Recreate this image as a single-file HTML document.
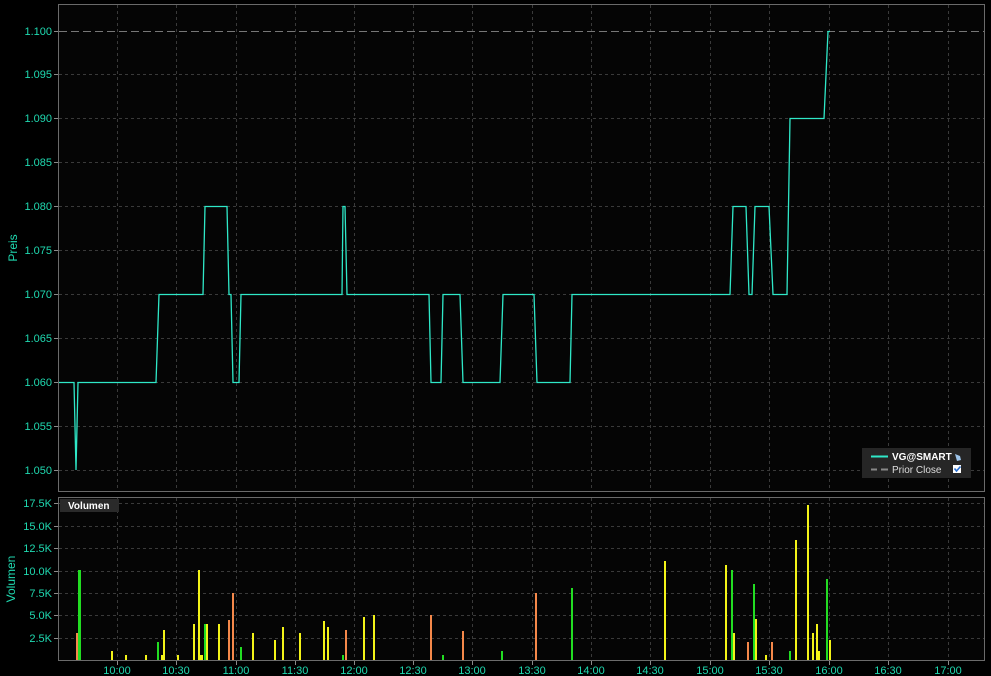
<!DOCTYPE html>
<html><head><meta charset="utf-8"><style>
html,body{margin:0;padding:0;background:#000;width:991px;height:676px;overflow:hidden}
svg{display:block}
text{font-family:"Liberation Sans",sans-serif;font-size:11px;fill:#1fd9b0}
</style></head><body>
<svg width="991" height="676" xmlns="http://www.w3.org/2000/svg">
<rect width="991" height="676" fill="#000"/>
<rect x="58.5" y="4.5" width="926" height="487" fill="#050505" stroke="#6a6a6a"/>
<rect x="58.5" y="497.5" width="926" height="163" fill="#050505" stroke="#6a6a6a"/>
<g stroke="#3a3a3a" stroke-dasharray="3,3" stroke-width="1">
<path d="M117.5 5V491M176.5 5V491M236.5 5V491M295.5 5V491M354.5 5V491M413.5 5V491M472.5 5V491M532.5 5V491M591.5 5V491M650.5 5V491M710.5 5V491M769.5 5V491M829.5 5V491M888.5 5V491M948.5 5V491"/>
<path d="M117.5 498V660M176.5 498V660M236.5 498V660M295.5 498V660M354.5 498V660M413.5 498V660M472.5 498V660M532.5 498V660M591.5 498V660M650.5 498V660M710.5 498V660M769.5 498V660M829.5 498V660M888.5 498V660M948.5 498V660"/>
<path d="M59 74.5H984M59 118.5H984M59 162.5H984M59 206.5H984M59 250.5H984M59 294.5H984M59 338.5H984M59 382.5H984M59 426.5H984M59 470.5H984"/>
<path d="M59 503.5H984M59 526.5H984M59 548.5H984M59 571.5H984M59 593.5H984M59 615.5H984M59 638.5H984"/>
</g>
<path d="M59 31.5H984" stroke="#777" stroke-dasharray="8,4"/>
<g stroke="#8a8a8a">
<path d="M54 31.5H58M54 74.5H58M54 118.5H58M54 162.5H58M54 206.5H58M54 250.5H58M54 294.5H58M54 338.5H58M54 382.5H58M54 426.5H58M54 470.5H58"/>
<path d="M54 503.5H58M54 526.5H58M54 548.5H58M54 571.5H58M54 593.5H58M54 615.5H58M54 638.5H58"/>
<path d="M117.5 661V665M176.5 661V665M236.5 661V665M295.5 661V665M354.5 661V665M413.5 661V665M472.5 661V665M532.5 661V665M591.5 661V665M650.5 661V665M710.5 661V665M769.5 661V665M829.5 661V665M888.5 661V665M948.5 661V665"/>
</g>
<g text-anchor="end">
<text x="52" y="35">1.100</text><text x="52" y="78">1.095</text><text x="52" y="122">1.090</text><text x="52" y="166">1.085</text><text x="52" y="210">1.080</text><text x="52" y="254">1.075</text><text x="52" y="298">1.070</text><text x="52" y="342">1.065</text><text x="52" y="386">1.060</text><text x="52" y="430">1.055</text><text x="52" y="474">1.050</text>
<text x="52" y="507">17.5K</text><text x="52" y="530">15.0K</text><text x="52" y="552">12.5K</text><text x="52" y="575">10.0K</text><text x="52" y="597">7.5K</text><text x="52" y="619">5.0K</text><text x="52" y="642">2.5K</text>
</g>
<g text-anchor="middle">
<text x="117" y="674">10:00</text><text x="176" y="674">10:30</text><text x="236" y="674">11:00</text><text x="295" y="674">11:30</text><text x="354" y="674">12:00</text><text x="413" y="674">12:30</text><text x="472" y="674">13:00</text><text x="532" y="674">13:30</text><text x="591" y="674">14:00</text><text x="650" y="674">14:30</text><text x="710" y="674">15:00</text><text x="769" y="674">15:30</text><text x="829" y="674">16:00</text><text x="888" y="674">16:30</text><text x="948" y="674">17:00</text>
</g>
<text transform="translate(17,248) rotate(-90)" text-anchor="middle" style="font-size:12px">Preis</text>
<text transform="translate(15,579) rotate(-90)" text-anchor="middle" style="font-size:12px">Volumen</text>
<path d="M59 382.5H74L76 470L78 382.5H156L159 294.5H203L205 206.5H227L229 294.5H231L233 382.5H239L241 294.5H342L343 206.5H345L347 294.5H429L431 382.5H441L443 294.5H460L463 382.5H500L503 294.5H534L537 382.5H570L572 294.5H730L733 206.5H746L749 294.5H752L755 206.5H769L773 294.5H787L790 118.5H824L828 31.5H830" fill="none" stroke="#2fe8c8" stroke-width="1.3"/>
<g>
<rect x="76" y="633" width="3" height="27" fill="#f5884a"/>
<rect x="78" y="570" width="3" height="90" fill="#22dd22"/>
<rect x="111" y="651" width="2" height="9" fill="#f3f318"/>
<rect x="125" y="655" width="2" height="5" fill="#f3f318"/>
<rect x="145" y="655" width="2" height="5" fill="#f3f318"/>
<rect x="157" y="642" width="2" height="18" fill="#22dd22"/>
<rect x="161" y="655" width="2" height="5" fill="#f3f318"/>
<rect x="163" y="630" width="2" height="30" fill="#f3f318"/>
<rect x="177" y="655" width="2" height="5" fill="#f3f318"/>
<rect x="193" y="624" width="2" height="36" fill="#f3f318"/>
<rect x="198" y="570" width="2" height="90" fill="#f3f318"/>
<rect x="200" y="655" width="3" height="5" fill="#f3f318"/>
<rect x="204" y="624" width="2" height="36" fill="#22dd22"/>
<rect x="206" y="624" width="2" height="36" fill="#f3f318"/>
<rect x="218" y="624" width="2" height="36" fill="#f3f318"/>
<rect x="228" y="620" width="2" height="40" fill="#f5884a"/>
<rect x="232" y="593" width="2" height="67" fill="#f5884a"/>
<rect x="240" y="647" width="2" height="13" fill="#22dd22"/>
<rect x="252" y="633" width="2" height="27" fill="#f3f318"/>
<rect x="274" y="640" width="2" height="20" fill="#f3f318"/>
<rect x="282" y="627" width="2" height="33" fill="#f3f318"/>
<rect x="299" y="633" width="2" height="27" fill="#f3f318"/>
<rect x="323" y="621" width="2" height="39" fill="#f3f318"/>
<rect x="327" y="627" width="2" height="33" fill="#f3f318"/>
<rect x="342" y="655" width="2" height="5" fill="#22dd22"/>
<rect x="345" y="630" width="2" height="30" fill="#f5884a"/>
<rect x="363" y="617" width="2" height="43" fill="#f3f318"/>
<rect x="373" y="615" width="2" height="45" fill="#f3f318"/>
<rect x="430" y="615" width="2" height="45" fill="#f5884a"/>
<rect x="442" y="655" width="2" height="5" fill="#22dd22"/>
<rect x="462" y="631" width="2" height="29" fill="#f5884a"/>
<rect x="501" y="651" width="2" height="9" fill="#22dd22"/>
<rect x="535" y="593" width="2" height="67" fill="#f5884a"/>
<rect x="571" y="588" width="2" height="72" fill="#22dd22"/>
<rect x="664" y="561" width="2" height="99" fill="#f3f318"/>
<rect x="725" y="565" width="2" height="95" fill="#f3f318"/>
<rect x="731" y="570" width="2" height="90" fill="#22dd22"/>
<rect x="733" y="633" width="2" height="27" fill="#f3f318"/>
<rect x="747" y="642" width="2" height="18" fill="#f5884a"/>
<rect x="753" y="584" width="2" height="76" fill="#22dd22"/>
<rect x="755" y="619" width="2" height="41" fill="#f3f318"/>
<rect x="765" y="655" width="2" height="5" fill="#f3f318"/>
<rect x="771" y="642" width="2" height="18" fill="#f5884a"/>
<rect x="789" y="651" width="2" height="9" fill="#22dd22"/>
<rect x="795" y="540" width="2" height="120" fill="#f3f318"/>
<rect x="807" y="505" width="2" height="155" fill="#f3f318"/>
<rect x="812" y="633" width="2" height="27" fill="#f3f318"/>
<rect x="816" y="624" width="2" height="36" fill="#f3f318"/>
<rect x="818" y="651" width="2" height="9" fill="#f3f318"/>
<rect x="826" y="579" width="2" height="81" fill="#22dd22"/>
<rect x="829" y="640" width="2" height="20" fill="#f3f318"/>
</g>
<rect x="60" y="499" width="59" height="13" fill="#2a2a2a"/>
<text x="68" y="509" style="fill:#fff;font-weight:bold;font-size:10px">Volumen</text>
<rect x="862" y="448" width="109" height="30" fill="#262626"/>
<path d="M871 456.5H888" stroke="#2fe8c8" stroke-width="2"/>
<path d="M871 469.5H877M881 469.5H888" stroke="#888" stroke-width="2"/>
<text x="892" y="460" style="fill:#fff;font-weight:bold;font-size:10px">VG@SMART</text>
<text x="892" y="473" style="fill:#ddd;font-size:10px">Prior Close</text>
<path d="M955 454l5 2l1 4l-4 1z" fill="#9cc3e8"/>
<rect x="953" y="465" width="8" height="8" fill="#fff"/>
<path d="M954.5 468.5l2 2.5l4-4.5" stroke="#2a6fd0" stroke-width="1.6" fill="none"/>
</svg>
</body></html>
